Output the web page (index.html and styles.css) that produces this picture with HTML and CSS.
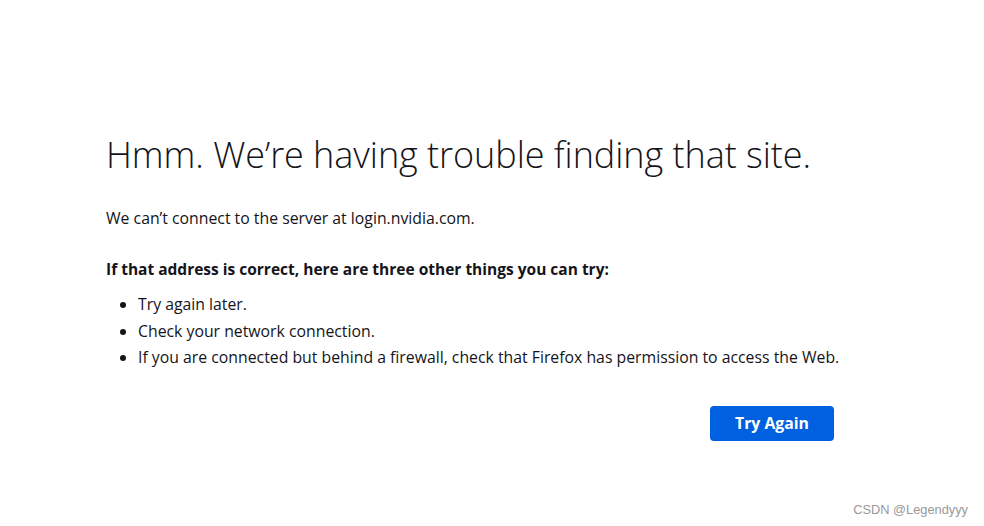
FILE: index.html
```html
<!DOCTYPE html>
<html>
<head>
<meta charset="utf-8">
<link rel="stylesheet" href="styles.css">
</head>
<body>
<main class="container">
  <h1 class="title">Hmm. We’re having trouble finding that site.</h1>
  <p class="intro">We can’t connect to the server at login.nvidia.com.</p>
  <p class="subhead">If that address is correct, here are three other things you can try:</p>
  <ul class="tips">
    <li>Try again later.</li>
    <li>Check your network connection.</li>
    <li>If you are connected but behind a firewall, check that Firefox has permission to access the Web.</li>
  </ul>
  <div class="actions">
    <button class="retry">Try Again</button>
  </div>
</main>
<div class="watermark">CSDN @Legendyyy</div>
</body>
</html>
```
FILE: styles.css
```css
html, body {
  margin: 0;
  padding: 0;
  background: #ffffff;
}
body {
  width: 984px;
  height: 526px;
  position: relative;
  overflow: hidden;
  font-family: "Open Sans", "Noto Sans", sans-serif;
  color: #15141a;
}
.container {
  width: 728px;
  padding: 132px 0 0 106px;
  display: flex;
  flex-direction: column;
}
.title {
  margin: 0;
  font-size: 36px;
  font-weight: 300;
  line-height: 46px;
  letter-spacing: -0.05px;
  white-space: nowrap;
}
.intro {
  margin: 29px 0 0 0;
  font-size: 15.8px;
  line-height: 22px;
}
.subhead {
  margin: 29px 0 0 0;
  font-size: 15.5px;
  line-height: 22px;
  font-weight: 700;
}
.tips {
  margin: 11px 0 0 0;
  padding: 0 0 0 32px;
  font-size: 15.8px;
  line-height: 26.5px;
  white-space: nowrap;
}
.actions {
  display: flex;
  justify-content: flex-end;
  margin-top: 35px;
}
.retry {
  width: 124px;
  height: 35px;
  border: none;
  border-radius: 4px;
  background: #0061e0;
  color: #ffffff;
  font-family: "Open Sans", "Noto Sans", sans-serif;
  font-size: 15.8px;
  font-weight: 700;
  padding: 0;
}
.watermark {
  position: absolute;
  right: 16px;
  bottom: 9px;
  font-family: "Liberation Sans", Arial, sans-serif;
  font-size: 12.8px;
  color: #999999;
}
```
